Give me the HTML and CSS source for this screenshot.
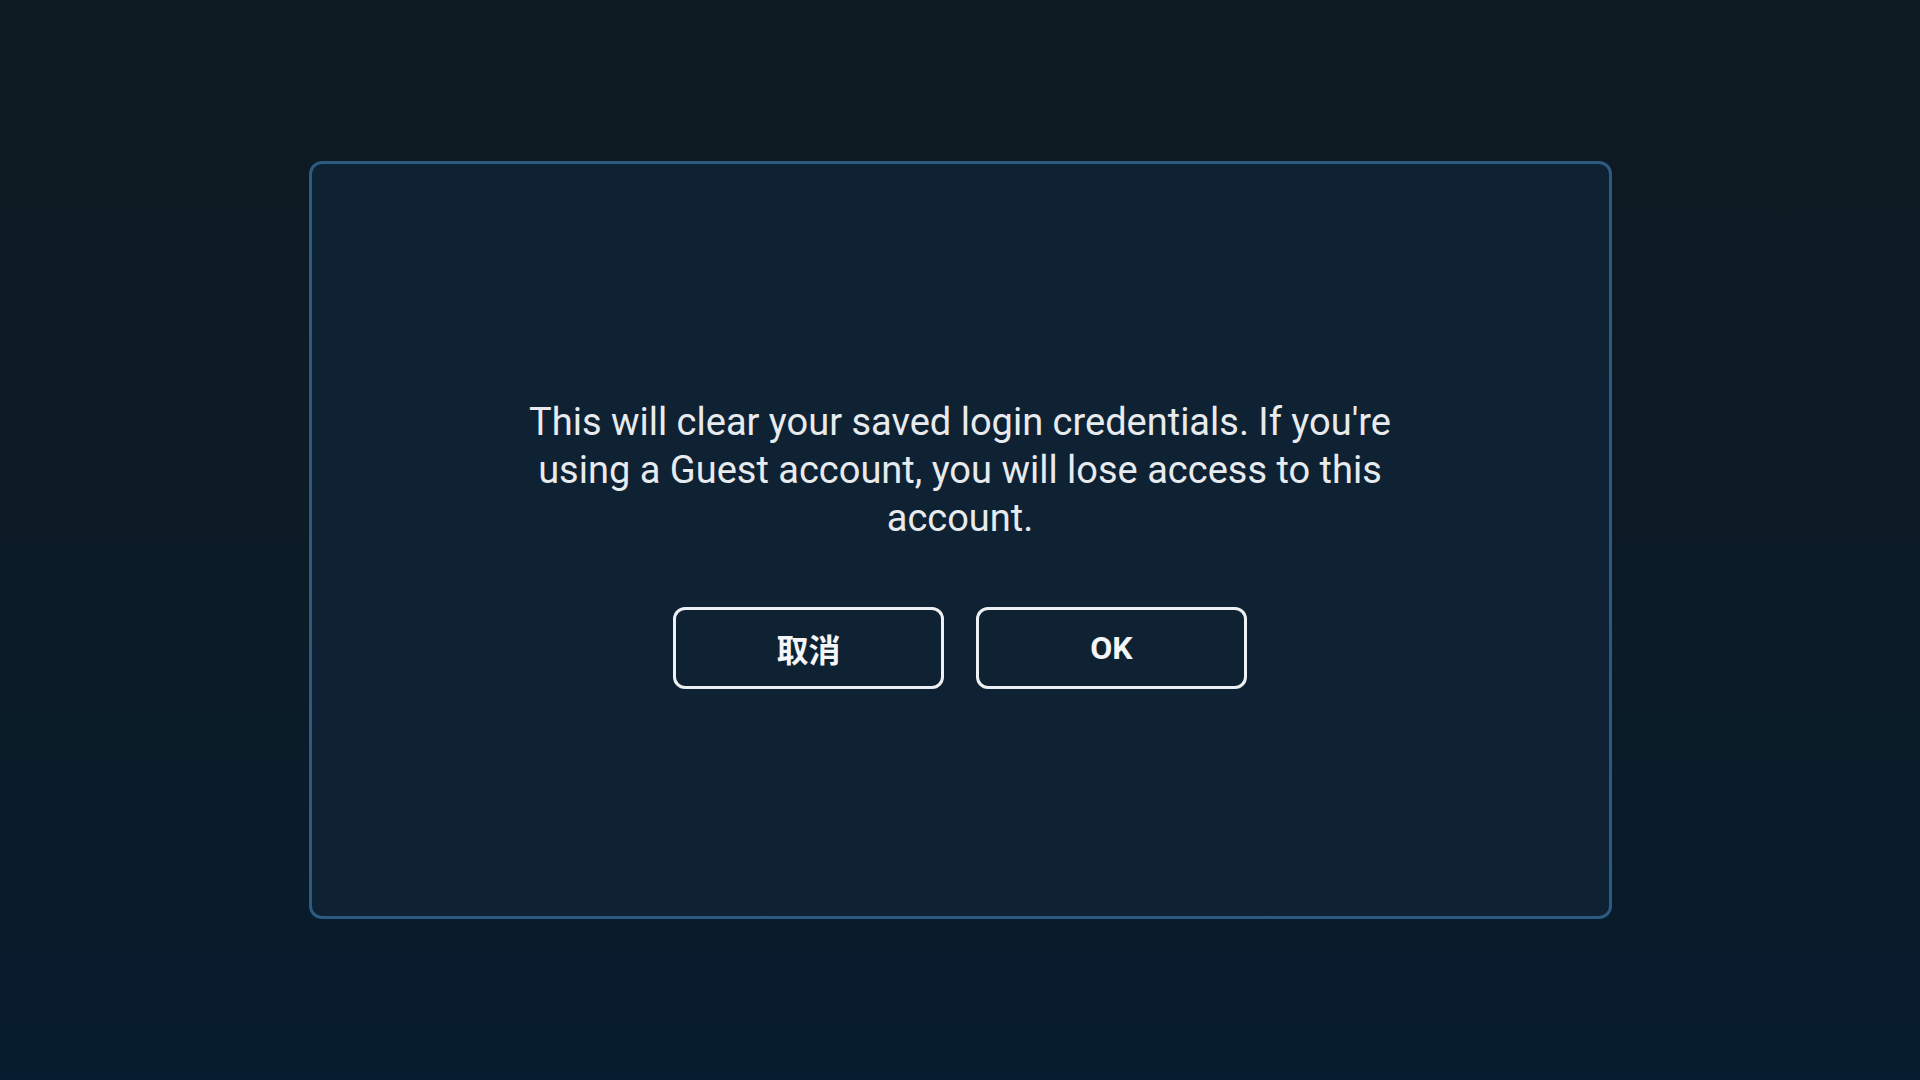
FILE: index.html
```html
<!DOCTYPE html>
<html lang="en">
<head>
    <meta charset="UTF-8">
    <meta name="viewport" content="width=device-width, initial-scale=1.0">
    <title>Clear Login</title>
    <link rel="stylesheet" href="styles.css">
</head>
<body>
    <div class="screen">
        <div class="dialog">
            <p class="message">This will clear your saved login credentials. If you're using a Guest account, you will lose access to this account.</p>
            <div class="actions">
                <button class="btn btn-cancel" type="button">取消</button>
                <button class="btn" type="button">OK</button>
            </div>
        </div>
    </div>
</body>
</html>
```

FILE: styles.css
```css
body {
    margin: 0;
    padding: 0;
    font-family: "Roboto", "Noto Sans CJK SC", sans-serif;
    color: #e8ebee;
}

.screen {
    width: 1920px;
    height: 1080px;
    display: flex;
    align-items: center;
    justify-content: center;
    background: linear-gradient(to bottom, #0e1a21 0%, #0b1b27 60%, #071c2e 100%);
}

.dialog {
    width: 1303px;
    height: 758px;
    box-sizing: border-box;
    border: 3px solid #2d5a80;
    border-radius: 13px;
    background-color: #0f2234;
    display: flex;
    flex-direction: column;
    align-items: center;
    justify-content: center;
    padding-top: 6px;
}

.message {
    margin: 0 0 65px;
    max-width: 900px;
    font-size: 38px;
    line-height: 48px;
    text-align: center;
    font-weight: 400;
}

.actions {
    display: flex;
    gap: 32px;
}

.btn {
    width: 271px;
    height: 82px;
    box-sizing: border-box;
    border: 3px solid #eef0f2;
    border-radius: 12px;
    background: transparent;
    color: #f4f5f6;
    font-family: "Roboto", "Noto Sans CJK SC", sans-serif;
    font-size: 32px;
    font-weight: 700;
    cursor: pointer;
    padding: 0;
}

.btn-cancel {
    font-family: "Noto Sans CJK SC", sans-serif;
}
```
